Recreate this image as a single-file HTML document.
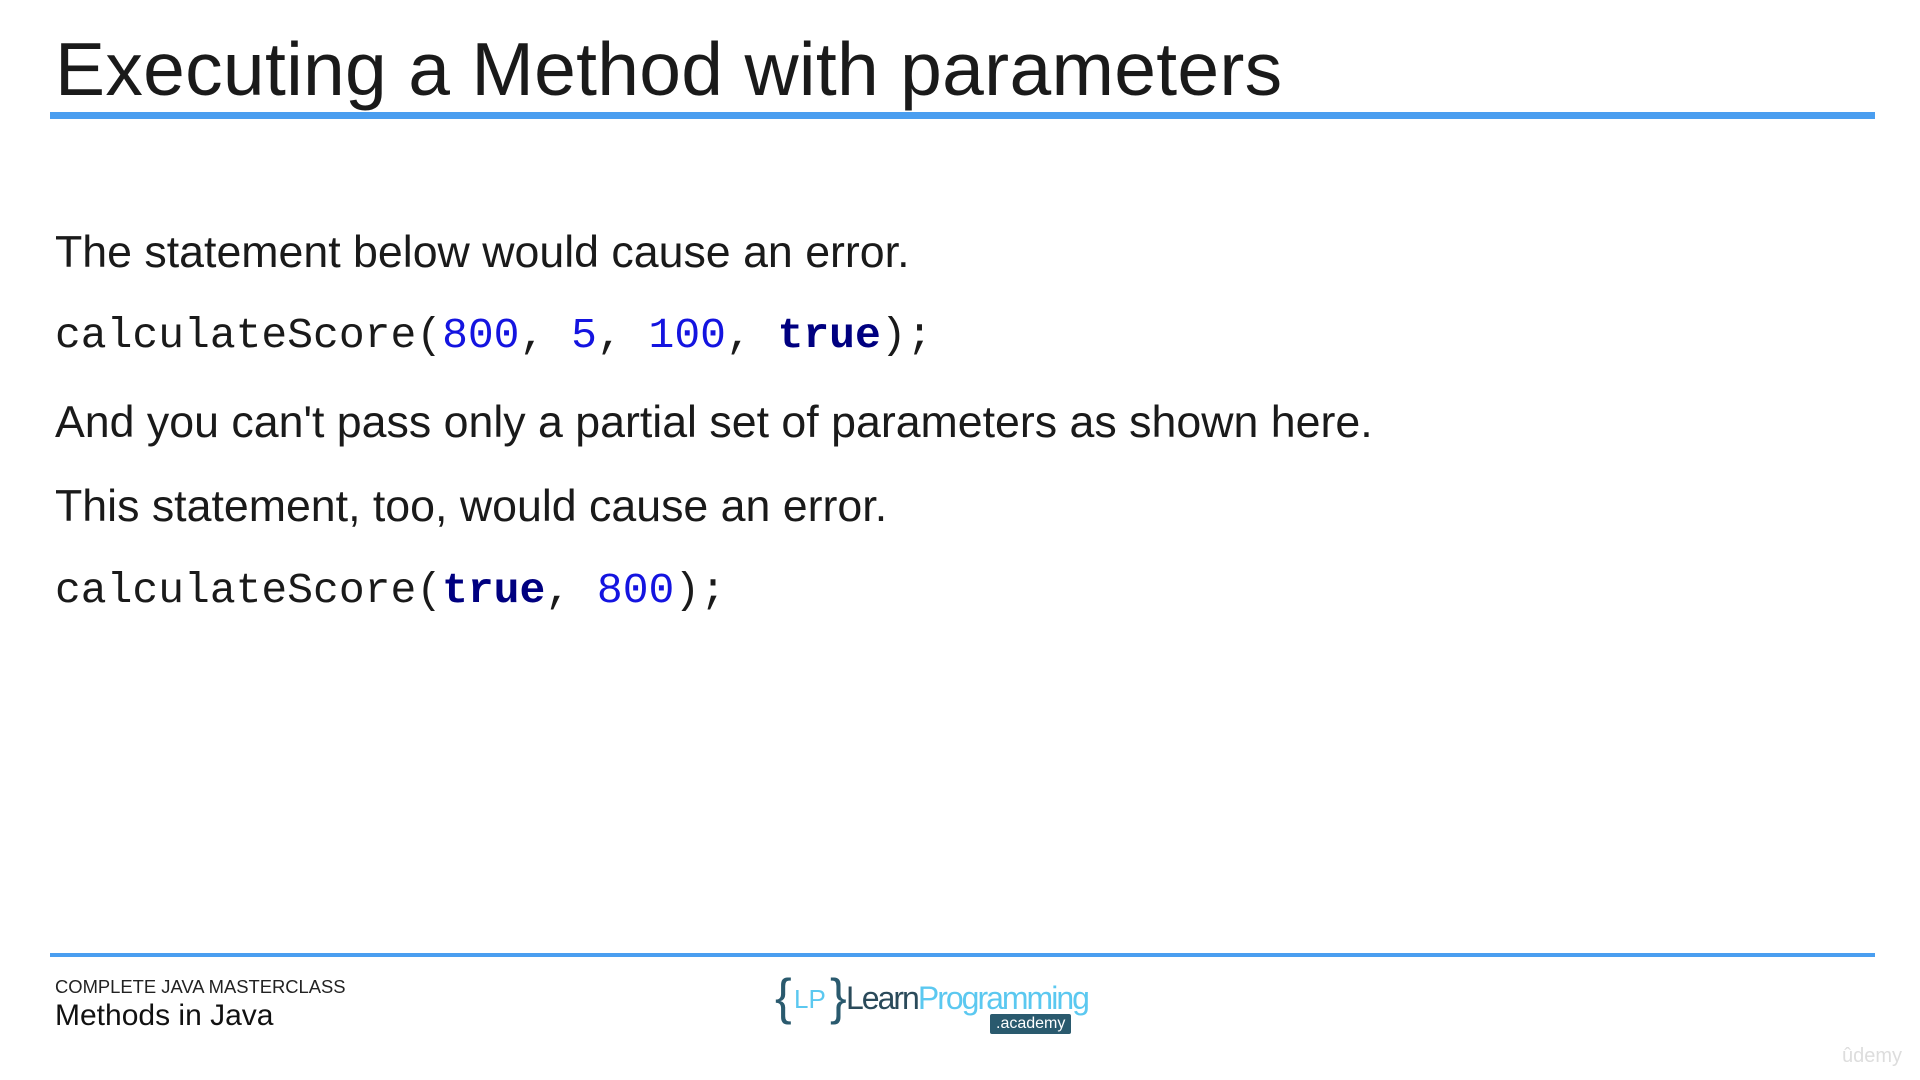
<!DOCTYPE html>
<html><head><meta charset="utf-8"><style>
html,body{margin:0;padding:0;background:#fff;}
body{width:1920px;height:1080px;position:relative;overflow:hidden;font-family:"Liberation Sans",sans-serif;color:#1a1a1a;}
.a{position:absolute;white-space:nowrap;line-height:1;}
.t{font-size:75px;left:55px;top:32px;letter-spacing:0.3px;}
.bar{position:absolute;left:50px;width:1825px;background:#4a9ef0;}
.p{font-size:44.7px;left:55px;}
.c{font-family:"Liberation Mono",monospace;font-size:43px;left:55px;}
.n{color:#1414e0;}
.k{color:#000080;font-weight:bold;}
.lg{position:absolute;left:775px;top:972px;width:320px;height:66px;}
</style></head><body>
<div class="a t">Executing a Method with parameters</div>
<div class="bar" style="top:112px;height:7px"></div>

<div class="a p" style="top:231px">The statement below would cause an error.</div>
<div class="a c" style="top:314px">calculateScore(<span class="n">800</span>, <span class="n">5</span>, <span class="n">100</span>, <span class="k">true</span>);</div>
<div class="a p" style="top:401px">And you can't pass only a partial set of parameters as shown here.</div>
<div class="a p" style="top:485px">This statement, too, would cause an error.</div>
<div class="a c" style="top:569px">calculateScore(<span class="k">true</span>, <span class="n">800</span>);</div>

<div class="bar" style="top:953px;height:4px"></div>
<div class="a" style="left:55px;top:978px;font-size:18.4px;color:#222">COMPLETE JAVA MASTERCLASS</div>
<div class="a" style="left:55px;top:1001px;font-size:30px;color:#111">Methods in Java</div>

<div class="lg">
 <div class="a" style="left:0;top:0;font-size:50px;color:#2a5a6e;">{</div>
 <div class="a" style="left:19px;top:14px;font-size:26px;color:#5bc8f0;">LP</div>
 <div class="a" style="left:55px;top:0;font-size:50px;color:#2a5a6e;">}</div>
 <div class="a" style="left:71px;top:10px;font-size:32px;letter-spacing:-2px;"><span style="color:#2a4a5a">Learn</span><span style="color:#5bc8f0">Programming</span></div>
 <div class="a" style="left:215px;top:42px;background:#2a5a6e;color:#fff;font-size:16px;padding:2px 6px;border-radius:2px;">.academy</div>
</div>
<div class="a" style="left:1842px;top:1046px;font-size:20px;color:#ddd;">ûdemy</div>
</body></html>
